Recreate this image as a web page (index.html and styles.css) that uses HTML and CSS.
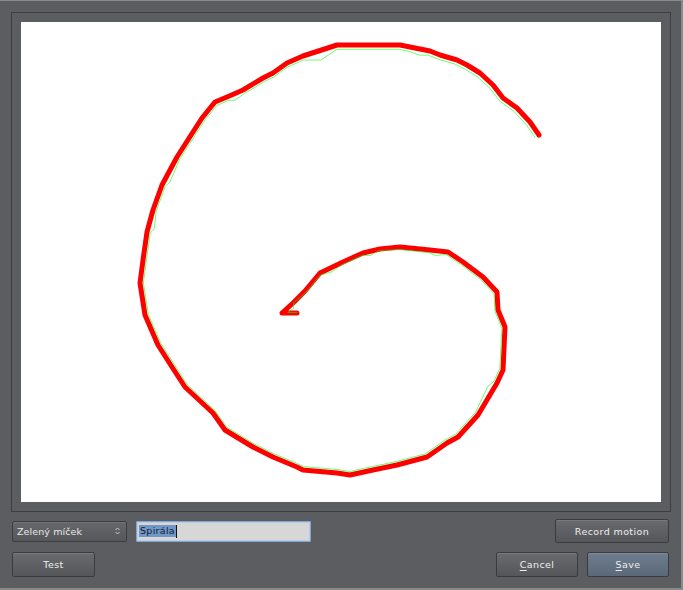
FILE: index.html
```html
<!DOCTYPE html>
<html>
<head>
<meta charset="utf-8">
<link rel="stylesheet" href="styles.css">
</head>
<body>
<div class="window">
  <div class="frame">
    <div class="canvas">
      <svg width="640" height="480" viewBox="0 0 640 480">
        <polyline class="red" points="276,291 261,291 272,281 284,269 299,251 322,240 342,231 359,227 379,225 409,228 427,230 442,240 462,255 476,270 477,288 484,305 482,348 476,361 457,393 437,415 426,421 406,435 376,443 352,448 329,453 316,451 282,448 276,445 252,435 232,425 204,408 192,391 164,365 151,345 137,323 124,293 119,261 122,238 126,210 132,188 141,163 156,135 172,110 181,96 194,80 206,75 222,68 242,56 252,51 266,41 282,34 316,23 379,23 389,25 409,29 419,33 436,38 446,43 459,51 472,63 482,76 496,86 509,100 518,113"/>
        <g transform="translate(309 258) scale(0.982) translate(-309 -258)">
          <polyline class="green" points="276,291 266,291 272,287 272,281 284,271 290,264 299,253 310,250 322,242 342,233 350,233 359,228 379,227 409,230 417,233 427,232 442,242 462,257 476,272 477,290 484,307 482,348 476,361 470,366 457,393 437,415 426,421 406,435 376,443 352,448 329,453 316,451 282,448 276,445 252,435 232,425 204,408 192,391 164,365 151,345 137,323 124,293 119,261 122,238 126,210 130,206 132,188 141,163 146,158 156,135 172,110 181,96 194,80 206,75 212,75 222,68 242,56 252,51 266,41 282,34 300,34 316,23 379,23 389,25 400,29 409,29 419,33 436,38 446,43 459,51 472,63 482,76 496,86 509,100 518,113"/>
        </g>
      </svg>
    </div>
  </div>
  <div class="row row-top">
    <div class="combo">
      <span class="combo-text">Zelený míček</span>
      <svg class="spin" width="5" height="8" viewBox="0 0 5 8"><path d="M0.5 3 L2.5 1 L4.5 3 M0.5 5 L2.5 7 L4.5 5" fill="none" stroke="#c8c8c8" stroke-width="1"/></svg>
    </div>
    <div class="input"><span class="sel">Spirála</span><span class="caret"></span></div>
    <div class="spacer"></div>
    <div class="btn rec">Record motion</div>
  </div>
  <div class="row row-bottom">
    <div class="btn test">Test</div>
    <div class="spacer"></div>
    <div class="btn cancel"><u>C</u>ancel</div>
    <div class="btn save"><u>S</u>ave</div>
  </div>
</div>
</body>
</html>
```
FILE: styles.css
```css
html {
  background: #8a8a8a;
  height: 590px;
  overflow: hidden;
}
body {
  margin: 1px 2px 2px 0;
  width: 681px;
  height: 587px;
  background: #5c5d61;
  font-family: "DejaVu Sans", sans-serif;
  font-size: 9.5px;
  color: #e8e8e8;
}
.window {
  padding-top: 11px;
}
.frame {
  margin: 0 10px 0 11px;
  border: 1px solid #3c3d40;
  padding: 9px;
}
.canvas {
  width: 640px;
  height: 480px;
  background: #ffffff;
}
.canvas svg {
  display: block;
}
.red {
  fill: none;
  stroke: #ff0000;
  stroke-width: 5;
  stroke-linejoin: round;
  stroke-linecap: round;
}
.green {
  fill: none;
  stroke: #00ff00;
  stroke-opacity: 0.6;
  stroke-width: 1;
}
.row {
  display: flex;
  align-items: center;
  padding: 0 12px;
}
.row-top {
  margin-top: 7px;
  height: 24px;
}
.row-bottom {
  margin-top: 9px;
  height: 25px;
}
.spacer {
  flex: 1;
}
.combo {
  box-sizing: border-box;
  width: 115px;
  height: 21px;
  border: 1px solid #3c3d40;
  border-radius: 2px;
  background: linear-gradient(#66676b, #56575b);
  box-shadow: inset 0 1px 0 rgba(255,255,255,0.08);
  display: flex;
  align-items: center;
  padding: 0 6px 0 4px;
}
.combo-text {
  flex: 1;
  letter-spacing: 0.1px;
}
.spin {
  display: block;
}
.input {
  box-sizing: border-box;
  margin-left: 9px;
  width: 175px;
  height: 21px;
  border: 1px solid #7ba7da;
  border-radius: 1px;
  background: #d7d7d7;
  box-shadow: inset 0 0 0 1px rgba(140,180,225,0.35);
  display: flex;
  align-items: center;
  padding-left: 2px;
  color: #1a2130;
}
.sel {
  background: #7097c8;
  line-height: 12px;
  padding: 0 1px 0 1px;
  letter-spacing: 0.3px;
}
.caret {
  width: 1px;
  height: 13px;
  background: #111;
}
.btn {
  box-sizing: border-box;
  height: 100%;
  border: 1px solid #3a3b3e;
  border-radius: 2px;
  background: linear-gradient(#6a6b6f, #55565a);
  box-shadow: inset 0 1px 0 rgba(255,255,255,0.1);
  display: flex;
  align-items: center;
  justify-content: center;
  letter-spacing: 0.4px;
  color: #eeeeee;
}
.btn u {
  text-decoration: underline;
  text-underline-offset: 2px;
}
.rec {
  width: 114px;
}
.test {
  width: 83px;
}
.cancel {
  width: 82px;
}
.save {
  width: 82px;
  margin-left: 9px;
  background: linear-gradient(#6f7e8e, #5a6878);
}
```
